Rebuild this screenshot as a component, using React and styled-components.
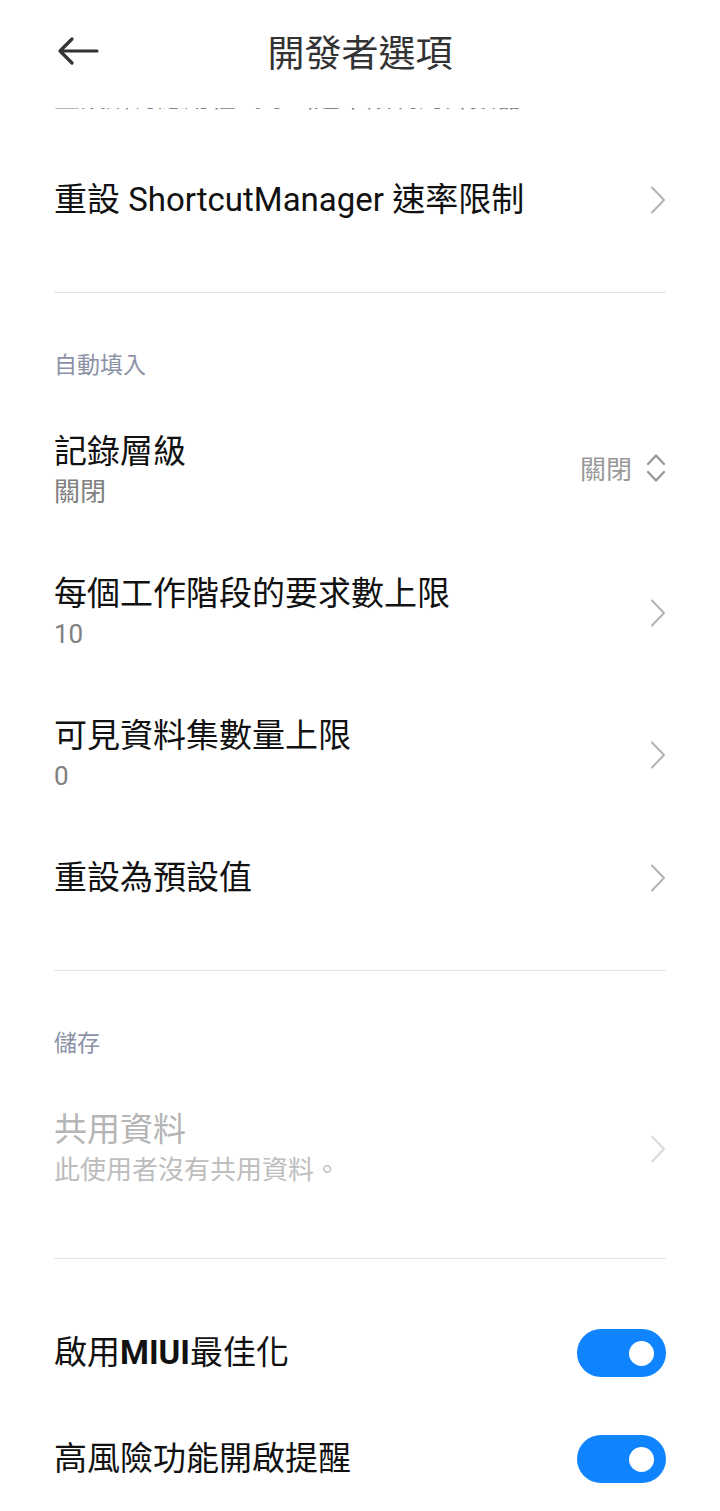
import React from "react";
import styled, { createGlobalStyle } from "styled-components";

const Global = createGlobalStyle`
  html, body { margin: 0; padding: 0; background: #fff; }
  body { font-family: Roboto, "Noto Sans CJK TC", sans-serif; -webkit-font-smoothing: antialiased; }
  * { box-sizing: border-box; }
`;

const Page = styled.div`
  width: 720px;
  height: 1511px;
  display: flex;
  flex-direction: column;
  overflow: hidden;
  background: #fff;
`;

const Header = styled.header`
  height: 108px;
  flex-shrink: 0;
  display: grid;
  grid-template-columns: 1fr auto 1fr;
  align-items: center;
  padding: 0 57px 6px;
  background: #fff;
`;

const BackButton = styled.button`
  justify-self: start;
  width: 42px;
  height: 30px;
  padding: 0;
  border: 0;
  background: none;
  display: flex;
  align-items: center;
`;

const Title = styled.h1`
  margin: 0;
  font-size: 37px;
  line-height: 50px;
  font-weight: 400;
  color: #333;
  font-family: "Noto Sans CJK TC", sans-serif;
`;

const Viewport = styled.main`
  flex: 1;
  overflow: hidden;
`;

const Scroller = styled.div`
  margin-top: ${(p) => -p.$offset}px;
`;

const Group = styled.section`
  padding: ${(p) => (p.$top ? `${p.$top}px` : "0")} 0 ${(p) => p.$bottom ?? 40}px;
  border-bottom: ${(p) => (p.$last ? "0" : "1px solid #e3e3e3")};
  margin: 0 54px;
`;

const SectionTitle = styled.div`
  padding: 53px 0 20px;
  font-size: 23px;
  line-height: 34px;
  color: #8b92a6;
  font-family: "Noto Sans CJK TC", sans-serif;
`;

const Row = styled.div`
  display: flex;
  align-items: center;
  gap: 16px;
  padding: ${(p) => p.$pad ?? 31}px 0;
`;

const Texts = styled.div`
  flex: 1;
  display: flex;
  flex-direction: column;
  min-width: 0;
`;

const RowTitle = styled.div`
  font-size: 33px;
  line-height: 42px;
  color: ${(p) => (p.$disabled ? "#b5b5b5" : "#111")};
  white-space: nowrap;
`;

const Bold = styled.span`
  font-weight: 700;
`;

const RowSub = styled.div`
  font-size: 26px;
  line-height: 38px;
  color: ${(p) => (p.$disabled ? "#bdbdbd" : "#808080")};
  white-space: nowrap;
`;

const Value = styled.div`
  display: flex;
  align-items: center;
  gap: 14px;
  font-size: 26px;
  line-height: 30px;
  color: #999;
  font-family: "Noto Sans CJK TC", sans-serif;
  margin-top: -6px;
`;

const Switch = styled.div`
  width: 89px;
  height: 48px;
  border-radius: 24px;
  background: #0f84fe;
  display: flex;
  align-items: center;
  justify-content: flex-end;
  padding-right: 12px;
  flex-shrink: 0;
`;

const Knob = styled.div`
  width: 25px;
  height: 25px;
  border-radius: 50%;
  background: #fff;
`;

const Chevron = ({ light }) => (
  <svg width="16" height="28" viewBox="0 0 16 28" style={{ flexShrink: 0 }}>
    <path d="M2 1.5 L14 14 L2 26.5" fill="none" stroke={light ? "#dadada" : "#b3b3b3"} strokeWidth="2" strokeLinecap="round" strokeLinejoin="round" />
  </svg>
);

const UpDown = () => (
  <svg width="20" height="30" viewBox="0 0 20 30">
    <path d="M2 11 L10 2.5 L18 11" fill="none" stroke="#999" strokeWidth="2.4" strokeLinecap="round" strokeLinejoin="round" />
    <path d="M2 19 L10 27.5 L18 19" fill="none" stroke="#999" strokeWidth="2.4" strokeLinecap="round" strokeLinejoin="round" />
  </svg>
);

const BackArrow = () => (
  <svg width="42" height="30" viewBox="0 0 42 30">
    <path d="M40 15 H3 M15 3 L3 15 L15 27" fill="none" stroke="#333" strokeWidth="3.2" strokeLinecap="round" strokeLinejoin="round" />
  </svg>
);

export default function App() {
  return (
    <>
      <Global />
      <Page>
        <Header>
          <BackButton aria-label="返回">
            <BackArrow />
          </BackButton>
          <Title>開發者選項</Title>
          <span />
        </Header>
        <Viewport>
          <Scroller $offset={60}>
            <Group>
              <Row>
                <Texts>
                  <RowSub>重設所有應用程式呼叫速率限制的計數器。</RowSub>
                </Texts>
              </Row>
              <Row>
                <Texts>
                  <RowTitle>重設 ShortcutManager 速率限制</RowTitle>
                </Texts>
                <Chevron />
              </Row>
            </Group>

            <Group>
              <SectionTitle>自動填入</SectionTitle>
              <Row>
                <Texts>
                  <RowTitle>記錄層級</RowTitle>
                  <RowSub>關閉</RowSub>
                </Texts>
                <Value>
                  關閉
                  <UpDown />
                </Value>
              </Row>
              <Row>
                <Texts>
                  <RowTitle>每個工作階段的要求數上限</RowTitle>
                  <RowSub>10</RowSub>
                </Texts>
                <Chevron />
              </Row>
              <Row>
                <Texts>
                  <RowTitle>可見資料集數量上限</RowTitle>
                  <RowSub>0</RowSub>
                </Texts>
                <Chevron />
              </Row>
              <Row>
                <Texts>
                  <RowTitle>重設為預設值</RowTitle>
                </Texts>
                <Chevron />
              </Row>
            </Group>

            <Group $bottom={38}>
              <SectionTitle>儲存</SectionTitle>
              <Row>
                <Texts>
                  <RowTitle $disabled>共用資料</RowTitle>
                  <RowSub $disabled>此使用者沒有共用資料。</RowSub>
                </Texts>
                <Chevron light />
              </Row>
            </Group>

            <Group $top={41} $bottom={0} $last>
              <Row $pad={29}>
                <Texts>
                  <RowTitle>
                    啟用<Bold>MIUI</Bold>最佳化
                  </RowTitle>
                </Texts>
                <Switch>
                  <Knob />
                </Switch>
              </Row>
              <Row $pad={29}>
                <Texts>
                  <RowTitle>高風險功能開啟提醒</RowTitle>
                </Texts>
                <Switch>
                  <Knob />
                </Switch>
              </Row>
            </Group>
          </Scroller>
        </Viewport>
      </Page>
    </>
  );
}
